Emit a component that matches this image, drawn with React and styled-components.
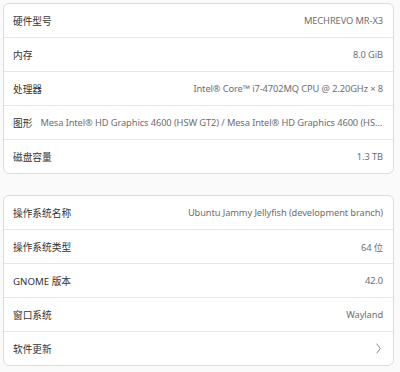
import React from "react";
import styled, { createGlobalStyle } from "styled-components";

const GlobalStyle = createGlobalStyle`
  html, body {
    margin: 0;
    background: #fafafa;
  }
  body {
    font-family: "Noto Sans", "Noto Sans CJK SC", sans-serif;
    font-size: 10px;
    color: #333333;
  }
`;

const Page = styled.div`
  padding: 3px 6px 0 3px;
  display: flex;
  flex-direction: column;
  gap: 21px;
`;

const Card = styled.div`
  background: #ffffff;
  border: 1px solid #dcdcdc;
  border-radius: 6px;
  overflow: hidden;
`;

const Row = styled.div`
  height: 33px;
  display: flex;
  align-items: center;
  padding: 0 10px 0 9px;
  gap: 8px;
  & + & {
    border-top: 1px solid #e6e6e6;
  }
`;

const Label = styled.div`
  flex: none;
  white-space: nowrap;
  font-size: 9.7px;
  color: #333333;
`;

const Value = styled.div`
  flex: 1;
  min-width: 0;
  text-align: right;
  white-space: nowrap;
  overflow: hidden;
  text-overflow: ellipsis;
  font-size: 9.3px;
  letter-spacing: -0.1px;
  color: #6e6e6e;
`;

const Chevron = styled.svg`
  margin-left: auto;
  margin-right: 2px;
  flex: none;
`;

const hardware = [
  ["硬件型号", "MECHREVO MR-X3"],
  ["内存", "8.0 GiB"],
  ["处理器", "Intel® Core™ i7-4702MQ CPU @ 2.20GHz × 8"],
  ["图形", "Mesa Intel® HD Graphics 4600 (HSW GT2) / Mesa Intel® HD Graphics 4600 (HSW GT2)"],
  ["磁盘容量", "1.3 TB"],
];

const software = [
  ["操作系统名称", "Ubuntu Jammy Jellyfish (development branch)"],
  ["操作系统类型", "64 位"],
  ["GNOME 版本", "42.0"],
  ["窗口系统", "Wayland"],
];

export default function App() {
  return (
    <>
      <GlobalStyle />
      <Page>
        <Card>
          {hardware.map(([k, v]) => (
            <Row key={k}>
              <Label>{k}</Label>
              <Value>{v}</Value>
            </Row>
          ))}
        </Card>
        <Card>
          {software.map(([k, v]) => (
            <Row key={k}>
              <Label>{k}</Label>
              <Value>{v}</Value>
            </Row>
          ))}
          <Row>
            <Label>软件更新</Label>
            <Chevron width="5" height="11" viewBox="0 0 5 11">
              <path d="M0.7 0.7 L4.3 5.5 L0.7 10.3" fill="none" stroke="#8a8a8a" strokeWidth="1" />
            </Chevron>
          </Row>
        </Card>
      </Page>
    </>
  );
}
